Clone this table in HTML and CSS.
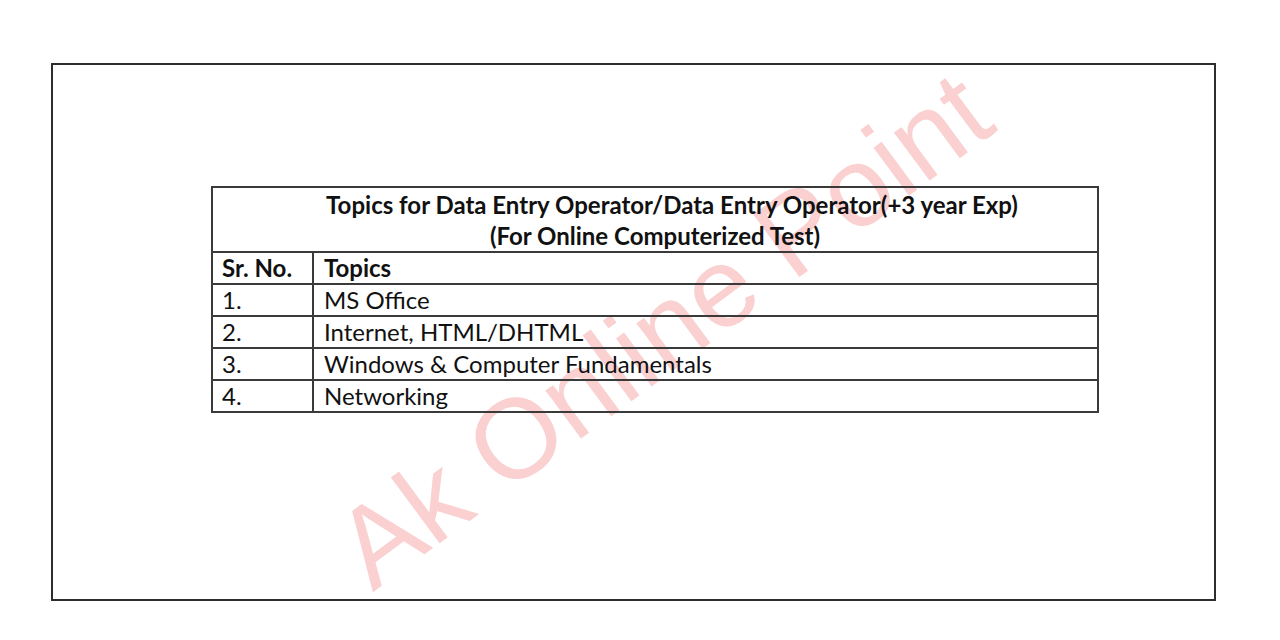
FILE: index.html
```html
<!DOCTYPE html>
<html>
<head>
<meta charset="utf-8">
<link rel="stylesheet" href="styles.css">
</head>
<body>
<div class="frame">
  <div class="watermark">Ak Online Point</div>
  <table class="topics">
    <tr class="head-row">
      <td colspan="2" class="title">
        <div class="title-line1">Topics for Data Entry Operator/Data Entry Operator(+3 year Exp)</div>
        <div class="title-line2">(For Online Computerized Test)</div>
      </td>
    </tr>
    <tr>
      <td class="col-no bold">Sr. No.</td>
      <td class="col-topic bold">Topics</td>
    </tr>
    <tr><td class="col-no">1.</td><td class="col-topic">MS Office</td></tr>
    <tr><td class="col-no">2.</td><td class="col-topic">Internet, HTML/DHTML</td></tr>
    <tr><td class="col-no">3.</td><td class="col-topic">Windows &amp; Computer Fundamentals</td></tr>
    <tr><td class="col-no">4.</td><td class="col-topic">Networking</td></tr>
  </table>
</div>
</body>
</html>
```
FILE: styles.css
```css
html, body {
  margin: 0;
  padding: 0;
  background: #ffffff;
}
body {
  padding: 63px 0 0 51px;
  font-family: Lato, "Open Sans", sans-serif;
  color: #111;
}
.frame {
  position: relative;
  box-sizing: border-box;
  width: 1165px;
  height: 538px;
  border: 2px solid #2e2e2e;
}
.watermark {
  position: absolute;
  left: 610px;
  top: 265px;
  transform: translate(-50%, -50%) rotate(-36.5deg);
  font-family: "Liberation Sans", Arial, sans-serif;
  font-size: 113px;
  line-height: 1;
  white-space: nowrap;
  color: #fad0d0;
  z-index: 0;
  pointer-events: none;
}
.topics {
  position: relative;
  z-index: 1;
  margin: 121px 0 0 158px;
  width: 888px;
  border-collapse: collapse;
  font-size: 24px;
  background: transparent;
}
.topics td {
  border: 2px solid #3a3a3a;
  padding: 0;
  height: 30px;
  line-height: 28px;
  vertical-align: middle;
}
.head-row .title {
  height: 63px;
  text-align: center;
  font-weight: 700;
  line-height: 31px;
}
.title-line1 {
  padding-left: 34px;
}
.col-no {
  width: 90px;
  padding-left: 9px !important;
}
.col-topic {
  padding-left: 10px !important;
}
.bold {
  font-weight: 700;
}
```
